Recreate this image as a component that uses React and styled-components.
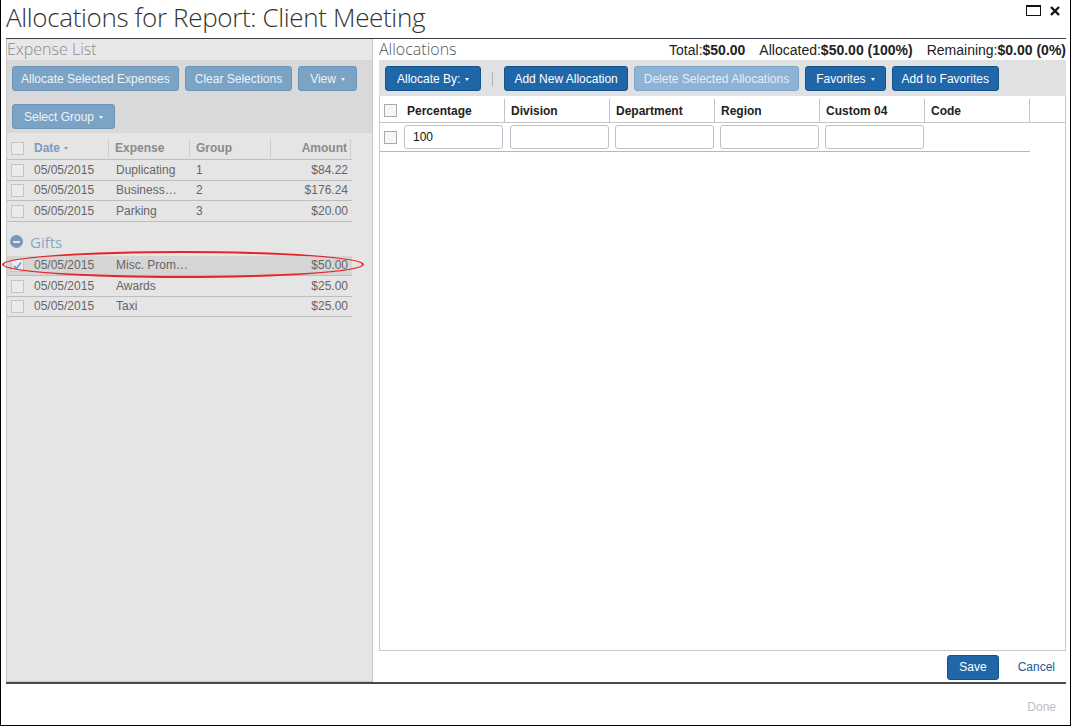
import React from "react";
import styled, { createGlobalStyle, css } from "styled-components";

const GlobalStyle = createGlobalStyle`
  * { box-sizing: border-box; }
  body {
    margin: 0;
    background: #fff;
    font-family: "Liberation Sans", Arial, sans-serif;
    font-size: 12px;
  }
`;

const Window = styled.div`
  width: 1071px;
  height: 726px;
  border: 1px solid #000;
  border-top: none;
  background: #fff;
  display: flex;
  flex-direction: column;
  padding: 0 4px 0 5px;
`;

const Header = styled.div`
  height: 39px;
  flex-shrink: 0;
  display: flex;
  justify-content: space-between;
  align-items: flex-start;
  border-bottom: 1px solid #3a3f48;
`;

const Title = styled.h1`
  margin: 0;
  padding-top: 1px;
  font-family: "Open Sans", sans-serif;
  font-weight: 300;
  font-size: 26px;
  line-height: 32px;
  color: #333;
  letter-spacing: -0.35px;
`;

const WindowControls = styled.div`
  display: flex;
  align-items: center;
  gap: 9px;
  padding-top: 5px;
  margin-right: 6px;
`;

const MaxBox = styled.div`
  width: 15px;
  height: 11px;
  border: 1px solid #111;
  border-top-width: 2px;
`;

const Body = styled.div`
  height: 645px;
  flex-shrink: 0;
  display: flex;
  gap: 6px;
  border-bottom: 2px solid #444a54;
`;

const LeftPanel = styled.div`
  position: relative;
  width: 367px;
  background: #e5e5e5;
  border-left: 1px solid #c6c6c6;
  border-right: 1px solid #c6c6c6;
  border-bottom: 1px solid #c6c6c6;
  display: flex;
  flex-direction: column;
`;

const PanelTitle = styled.div`
  height: 21px;
  font-family: "Open Sans", sans-serif;
  font-weight: 300;
  font-size: 16px;
  line-height: 21px;
  color: ${(p) => (p.$dark ? "#555" : "#8c8c8c")};
  background: ${(p) => (p.$dark ? "#fff" : "#e8e8e8")};
  white-space: nowrap;
`;

const LeftToolbar = styled.div`
  background: #d9d9d9;
  padding: 6px 5px 5px 5px;
  display: flex;
  flex-wrap: wrap;
  align-content: flex-start;
  column-gap: 6px;
  row-gap: 13px;
  height: 73px;
`;

const Button = styled.button`
  height: 25px;
  padding: 0 ${(p) => p.$px ?? 9}px;
  border-radius: 3px;
  font-family: "Liberation Sans", Arial, sans-serif;
  font-size: 12px;
  cursor: pointer;
  white-space: nowrap;
  display: inline-flex;
  align-items: center;
  gap: 5px;
  ${(p) =>
    p.$variant === "muted"
      ? css`
          background: #7aa3c6;
          border: 1px solid #6d95b8;
          color: #eef3f8;
        `
      : p.$variant === "disabled"
      ? css`
          background: #8db3d6;
          border: 1px solid #7fa5c9;
          color: #e3edf6;
        `
      : css`
          background: #1f67a9;
          border: 1px solid #16528a;
          color: #fff;
        `}
`;

const Caret = styled.span`
  width: 0;
  height: 0;
  border-left: 2.5px solid transparent;
  border-right: 2.5px solid transparent;
  border-top: 3px solid currentColor;
  margin-top: 1px;
`;

const ExpenseTable = styled.div`
  width: 345px;
  margin-top: 4px;
`;

const ExpenseHeader = styled.div`
  display: grid;
  grid-template-columns: 22px 80px 81px 81px 80px;
  height: 23px;
  border-bottom: 1px solid #bdbdbd;
`;

const HeadCell = styled.div`
  display: flex;
  align-items: center;
  gap: 4px;
  font-weight: bold;
  color: ${(p) => (p.$link ? "#7b9cc4" : "#8a8a8a")};
  padding: 0 ${(p) => (p.$right ? "3px" : "0")} 0 ${(p) => p.$pl ?? 6}px;
  justify-content: ${(p) => (p.$right ? "flex-end" : "flex-start")};
  border-right: ${(p) => (p.$sep ? "1px solid #cdcdcd" : "none")};
  margin: 2px 0;
`;

const ExpenseRow = styled.div`
  display: grid;
  grid-template-columns: 22px 80px 81px 81px 80px;
  height: 20.5px;
  align-items: center;
  border-bottom: 1px solid #bdbdbd;
  background: ${(p) => (p.$selected ? "#d5d5d5" : "transparent")};
  color: #666;
`;

const Cell = styled.div`
  padding: 0 ${(p) => (p.$right ? "3px" : "0")} 0 ${(p) => p.$pl ?? 6}px;
  text-align: ${(p) => (p.$right ? "right" : "left")};
  white-space: nowrap;
`;

const Check = styled.span`
  display: inline-block;
  width: 13px;
  height: 13px;
  border: 1px solid ${(p) => (p.$light ? "#c4c4c4" : "#aaa")};
  background: ${(p) => (p.$light ? "#ebebeb" : "#f6f6f6")};
  margin-left: ${(p) => p.$ml ?? 4}px;
  position: relative;
  vertical-align: middle;
`;

const GroupLabel = styled.div`
  height: 34px;
  display: flex;
  align-items: center;
  gap: 7px;
  padding-left: 3px;
  padding-top: 6px;
  font-family: "Open Sans", sans-serif;
  font-size: 15px;
  color: #8aa5c6;
`;

const MinusIcon = styled.span`
  width: 13px;
  height: 13px;
  border-radius: 50%;
  background: #7797bd;
  display: flex;
  align-items: center;
  justify-content: center;
  &::after {
    content: "";
    width: 7px;
    height: 2px;
    background: #e5e5e5;
  }
`;

const Highlight = styled.div`
  position: absolute;
  left: -5px;
  top: 212px;
  width: 362px;
  height: 27px;
  border: 2px solid #e3262a;
  border-radius: 50%;
  pointer-events: none;
`;

const RightPanel = styled.div`
  flex: 1;
  display: flex;
  flex-direction: column;
`;

const RightTop = styled.div`
  height: 21px;
  display: flex;
  justify-content: space-between;
  align-items: center;
`;

const Summary = styled.div`
  display: flex;
  gap: 14px;
  font-size: 14px;
  color: #222;
  padding-top: 1px;
  b { font-weight: bold; }
`;

const RightToolbar = styled.div`
  height: 36px;
  flex-shrink: 0;
  background: #e0e1e3;
  padding: 6px 6px 0 6px;
  display: flex;
  gap: 6px;
  align-items: flex-start;
`;

const ToolSep = styled.span`
  width: 1px;
  height: 14px;
  background: #b0b0b0;
  margin: 6px 5px 0 5px;
`;

const GridBox = styled.div`
  flex: 1;
  border: 1px solid #c9c9c9;
  border-top: none;
  background: #fff;
`;

const GridHeader = styled.div`
  display: grid;
  grid-template-columns: 21px 104px repeat(5, 105px);
  height: 27px;
  border-bottom: 1px solid #c4c4c4;
  padding-top: 3px;
`;

const GridHead = styled.div`
  display: flex;
  align-items: center;
  padding-left: ${(p) => p.$pl ?? 6}px;
  font-weight: bold;
  color: #222;
  border-right: ${(p) => (p.$sep ? "1px solid #c4c4c4" : "none")};
`;

const GridRow = styled.div`
  display: grid;
  grid-template-columns: 21px 104px repeat(5, 105px);
  width: 650px;
  height: 29px;
  align-items: center;
  border-bottom: 1px solid #b8b8b8;
`;

const GridCell = styled.div`
  padding-left: ${(p) => p.$pl ?? 5}px;
`;

const Input = styled.input`
  width: 99px;
  height: 24px;
  border: 1px solid #bcc2ca;
  border-radius: 3px;
  padding: 0 8px;
  font-family: "Liberation Sans", Arial, sans-serif;
  font-size: 12px;
  color: #111;
  outline: none;
`;

const RightFooter = styled.div`
  height: 31px;
  flex-shrink: 0;
  display: flex;
  justify-content: flex-end;
  align-items: center;
  gap: 19px;
  padding-right: 11px;
  padding-top: 1px;
`;

const LinkText = styled.span`
  color: #21588f;
  font-size: 12px;
`;

const Footer = styled.div`
  flex: 1;
  display: flex;
  justify-content: flex-end;
  align-items: center;
  padding-right: 10px;
  padding-top: 4px;
  color: #bdbdbd;
`;

const expenses = [
  { date: "05/05/2015", name: "Duplicating", group: "1", amount: "$84.22" },
  { date: "05/05/2015", name: "Business…", group: "2", amount: "$176.24" },
  { date: "05/05/2015", name: "Parking", group: "3", amount: "$20.00" },
];

const gifts = [
  { date: "05/05/2015", name: "Misc. Prom…", amount: "$50.00", selected: true },
  { date: "05/05/2015", name: "Awards", amount: "$25.00" },
  { date: "05/05/2015", name: "Taxi", amount: "$25.00" },
];

const columns = ["Percentage", "Division", "Department", "Region", "Custom 04", "Code"];

const CheckMark = () => (
  <svg width="11" height="11" viewBox="0 0 11 11" style={{ position: "absolute", left: 0, top: 0 }}>
    <path d="M2 6 L4.5 8.5 L9 2.5" fill="none" stroke="#6b9fd4" strokeWidth="1.8" />
  </svg>
);

const ExpRow = ({ item }) => (
  <ExpenseRow $selected={item.selected}>
    <Cell $pl={0}>
      <Check $light>{item.selected && <CheckMark />}</Check>
    </Cell>
    <Cell $pl={5}>{item.date}</Cell>
    <Cell $pl={7}>{item.name}</Cell>
    <Cell>{item.group}</Cell>
    <Cell $right>{item.amount}</Cell>
  </ExpenseRow>
);

export default function App() {
  return (
    <>
      <GlobalStyle />
      <Window>
        <Header>
          <Title>Allocations for Report: Client Meeting</Title>
          <WindowControls>
            <MaxBox />
            <svg width="10" height="10" viewBox="0 0 10 10">
              <path d="M1 1 L9 9 M9 1 L1 9" stroke="#111" strokeWidth="2.4" />
            </svg>
          </WindowControls>
        </Header>
        <Body>
          <LeftPanel>
            <PanelTitle>Expense List</PanelTitle>
            <LeftToolbar>
              <Button $variant="muted" $px={8}>Allocate Selected Expenses</Button>
              <Button $variant="muted">Clear Selections</Button>
              <Button $variant="muted" $px={11}>
                View <Caret />
              </Button>
              <Button $variant="muted" $px={11}>
                Select Group <Caret />
              </Button>
            </LeftToolbar>
            <ExpenseTable>
              <ExpenseHeader>
                <HeadCell $pl={0}>
                  <Check $light />
                </HeadCell>
                <HeadCell $link $sep $pl={5}>
                  Date <Caret />
                </HeadCell>
                <HeadCell $sep>Expense</HeadCell>
                <HeadCell $sep>Group</HeadCell>
                <HeadCell $right $sep>Amount</HeadCell>
              </ExpenseHeader>
              {expenses.map((e) => (
                <ExpRow key={e.name} item={e} />
              ))}
              <GroupLabel>
                <MinusIcon />
                Gifts
              </GroupLabel>
              {gifts.map((e) => (
                <ExpRow key={e.name} item={e} />
              ))}
            </ExpenseTable>
            <Highlight />
          </LeftPanel>
          <RightPanel>
            <RightTop>
              <PanelTitle $dark>Allocations</PanelTitle>
              <Summary>
                <span>
                  Total:<b>$50.00</b>
                </span>
                <span>
                  Allocated:<b>$50.00 (100%)</b>
                </span>
                <span>
                  Remaining:<b>$0.00 (0%)</b>
                </span>
              </Summary>
            </RightTop>
            <RightToolbar>
              <Button $px={11}>
                Allocate By: <Caret />
              </Button>
              <ToolSep />
              <Button>Add New Allocation</Button>
              <Button $variant="disabled">Delete Selected Allocations</Button>
              <Button $px={10}>
                Favorites <Caret />
              </Button>
              <Button>Add to Favorites</Button>
            </RightToolbar>
            <GridBox>
              <GridHeader>
                <GridHead $pl={4}>
                  <Check $ml={0} />
                </GridHead>
                {columns.map((c) => (
                  <GridHead key={c} $sep>
                    {c}
                  </GridHead>
                ))}
              </GridHeader>
              <GridRow>
                <GridCell $pl={4}>
                  <Check $ml={0} />
                </GridCell>
                <GridCell $pl={3}>
                  <Input defaultValue="100" />
                </GridCell>
                <GridCell>
                  <Input />
                </GridCell>
                <GridCell>
                  <Input />
                </GridCell>
                <GridCell>
                  <Input />
                </GridCell>
                <GridCell>
                  <Input />
                </GridCell>
              </GridRow>
            </GridBox>
            <RightFooter>
              <Button $px={11}>Save</Button>
              <LinkText>Cancel</LinkText>
            </RightFooter>
          </RightPanel>
        </Body>
        <Footer>Done</Footer>
      </Window>
    </>
  );
}
